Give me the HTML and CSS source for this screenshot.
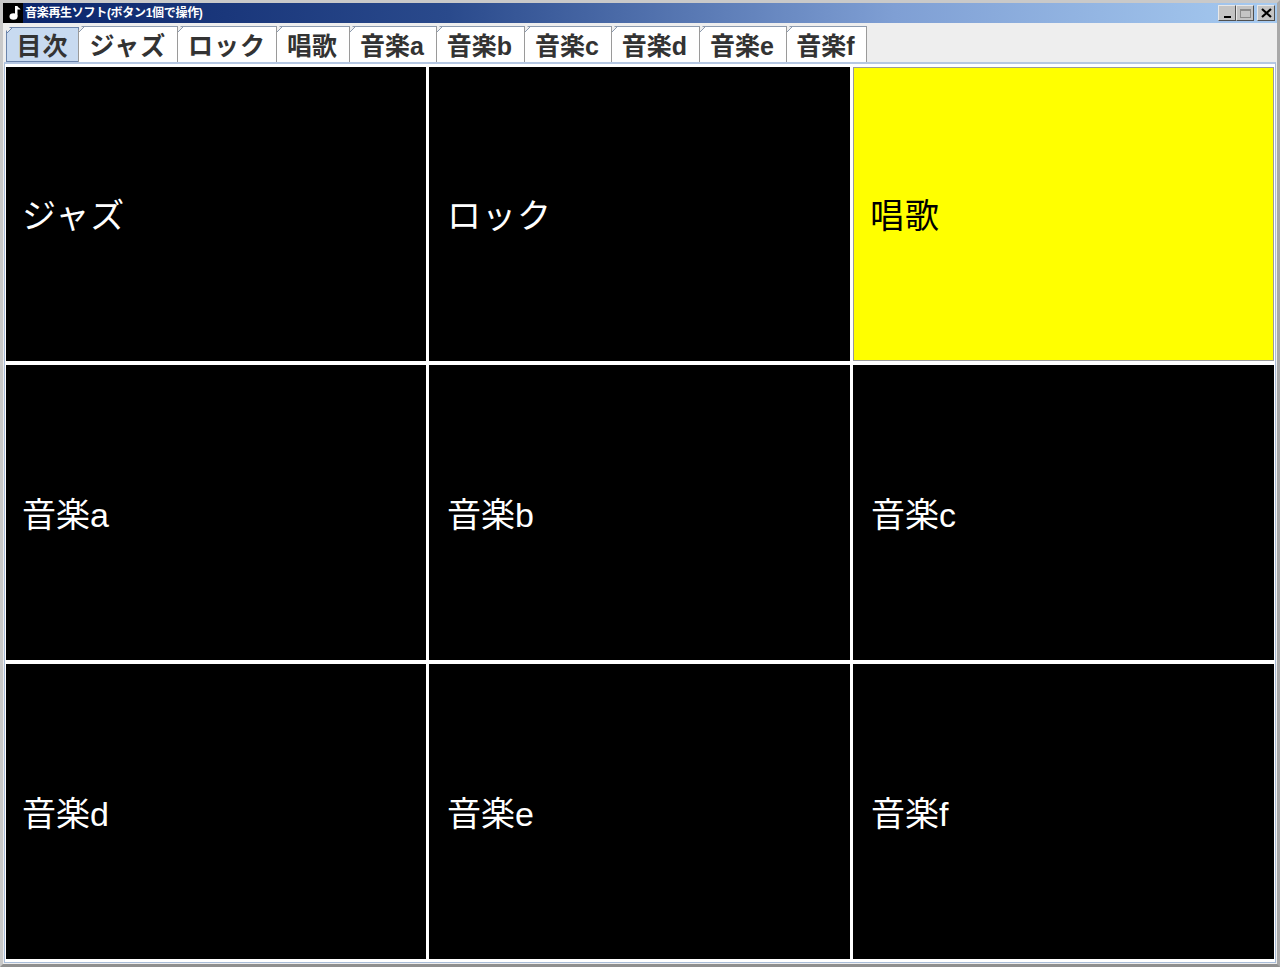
FILE: index.html
```html
<!DOCTYPE html>
<html lang="ja">
<head>
    <meta charset="UTF-8">
    <title>音楽再生ソフト(ボタン1個で操作)</title>
    <link rel="stylesheet" href="styles.css">
</head>
<body>
    <div class="window">
        <div class="titlebar">
            <div class="app-icon">
                <svg width="20" height="20" viewBox="0 0 20 20">
                    <ellipse cx="10.500" cy="13.500" rx="4" ry="3.200" fill="#fff"/>
                    <path d="M12 3h2.500v10.500h-2.500z" fill="#fff"/>
                    <path d="M14 3c1 1.500 3 2 3.500 3.500l-3.500 0z" fill="#fff"/>
                </svg>
            </div>
            <span class="title">音楽再生ソフト(ボタン1個で操作)</span>
            <div class="win-buttons">
                <div class="win-btn"><span class="ico-min"></span></div>
                <div class="win-btn disabled"><span class="ico-max"></span></div>
                <div class="win-btn close">
                    <svg width="11" height="10" viewBox="0 0 11 10">
                        <path d="M1 1l9 8M10 1l-9 8" stroke="#000" stroke-width="2.200" fill="none"/>
                    </svg>
                </div>
            </div>
        </div>

        <div class="tabs">
            <div class="tab active w72">目次</div>
            <div class="tab w99 kana">ジャズ</div>
            <div class="tab w99 kana">ロック</div>
            <div class="tab w73">唱歌</div>
            <div class="tab w87">音楽a</div>
            <div class="tab w88">音楽b</div>
            <div class="tab w87">音楽c</div>
            <div class="tab w88">音楽d</div>
            <div class="tab w87">音楽e</div>
            <div class="tab w80">音楽f</div>
        </div>

        <div class="panel">
            <div class="cell first"><span class="top-label">ジャズ</span></div>
            <div class="cell"><span class="top-label">ロック</span></div>
            <div class="cell selected"><span class="top-label">唱歌</span></div>
            <div class="cell first">音楽a</div>
            <div class="cell">音楽b</div>
            <div class="cell">音楽c</div>
            <div class="cell first">音楽d</div>
            <div class="cell">音楽e</div>
            <div class="cell">音楽f</div>
        </div>
    </div>
</body>
</html>
```

FILE: styles.css
```css
* {
    box-sizing: border-box;
}
html, body {
    margin: 0;
    height: 100%;
    overflow: hidden;
}
body {
    font-family: "Liberation Sans", "Noto Sans CJK JP", sans-serif;
    background-color: #eeeeee;
}
.window {
    width: 1280px;
    height: 967px;
    display: flex;
    flex-direction: column;
    border: 3px solid #c9c9c9;
    border-right-color: #a8a8a8;
    border-bottom-color: #8f8f8f;
    background-color: #eeeeee;
}
.titlebar {
    height: 20px;
    display: flex;
    align-items: center;
    background: linear-gradient(to right, #0a246a 0%, #2a4a8c 35%, #7f9fd4 70%, #a6caf0 100%);
    flex-shrink: 0;
}
.app-icon {
    width: 20px;
    height: 20px;
    background-color: #000;
    flex-shrink: 0;
}
.app-icon svg {
    display: block;
}
.title {
    margin-left: 2px;
    color: #fff;
    font-size: 12px;
    font-weight: bold;
    line-height: 20px;
    letter-spacing: -0.3px;
}
.win-buttons {
    margin-left: auto;
    display: flex;
    margin-right: 2px;
}
.win-btn {
    width: 18px;
    height: 16px;
    background-color: #c4c4c4;
    border: 1px solid;
    border-color: #e8e8e8 #505050 #505050 #e8e8e8;
    display: flex;
    align-items: center;
    justify-content: center;
}
.win-btn.close {
    margin-left: 3px;
}
.ico-min {
    width: 7px;
    height: 2px;
    background-color: #000;
    margin-top: 7px;
}
.ico-max {
    width: 11px;
    height: 9px;
    border: 1px solid #8a8a8a;
    border-top-width: 2px;
}
.tabs {
    height: 39px;
    padding: 3px 0 0 3px;
    display: flex;
    align-items: stretch;
    flex-shrink: 0;
}
.tab {
    height: 36px;
    display: flex;
    align-items: center;
    justify-content: center;
    background: linear-gradient(135deg, transparent 3px, #8d9baf 3px, #8d9baf 4px, #fff 4px);
    border: 1px solid #8d9baf;
    border-left-color: #9a9a9a;
    border-right-color: #9a9a9a;
    border-bottom: none;
    margin-right: -1px;
    padding-bottom: 2px;
    padding-right: 2px;
    font-size: 25px;
    font-weight: bold;
    color: #333333;
    white-space: nowrap;
    clip-path: polygon(4px 0, 100% 0, 100% 100%, 0 100%, 0 4px);
}
.tab.kana {
    letter-spacing: 1px;
    padding-right: 0;
}
.tab.active {
    background: linear-gradient(135deg, transparent 3px, #6b84ab 3px, #6b84ab 4px, #c8daf0 4px);
    border-color: #6b84ab;
    border-bottom: 1px solid #6b84ab;
    height: 35px;
    margin-top: 1px;
    letter-spacing: 1px;
    padding-right: 0;
}
.w72 { width: 73px; }
.w99 { width: 100px; }
.w73 { width: 74px; }
.w87 { width: 88px; }
.w88 { width: 89px; }
.w80 { width: 81px; }
.panel {
    flex: 1;
    margin: 0 1px 1px 1px;
    padding: 3px 1px 0 1px;
    display: grid;
    grid-template-columns: 420px 421px 421px;
    grid-template-rows: 294px 295px 295px;
    column-gap: 3px;
    row-gap: 4px;
    background-color: #fff;
    border: 1px solid #a9bdd9;
    border-top: 2px solid #b5c7e2;
}
.cell {
    background-color: #000;
    color: #fff;
    font-size: 34px;
    display: flex;
    align-items: center;
    padding-left: 18px;
}
.cell.first {
    padding-left: 16px;
}
.cell.selected {
    background-color: #ffff00;
    color: #000;
    border: 1px solid #9a9a9a;
    padding-left: 16px;
}
.top-label {
    margin-top: -1px;
    letter-spacing: 1px;
}
```
